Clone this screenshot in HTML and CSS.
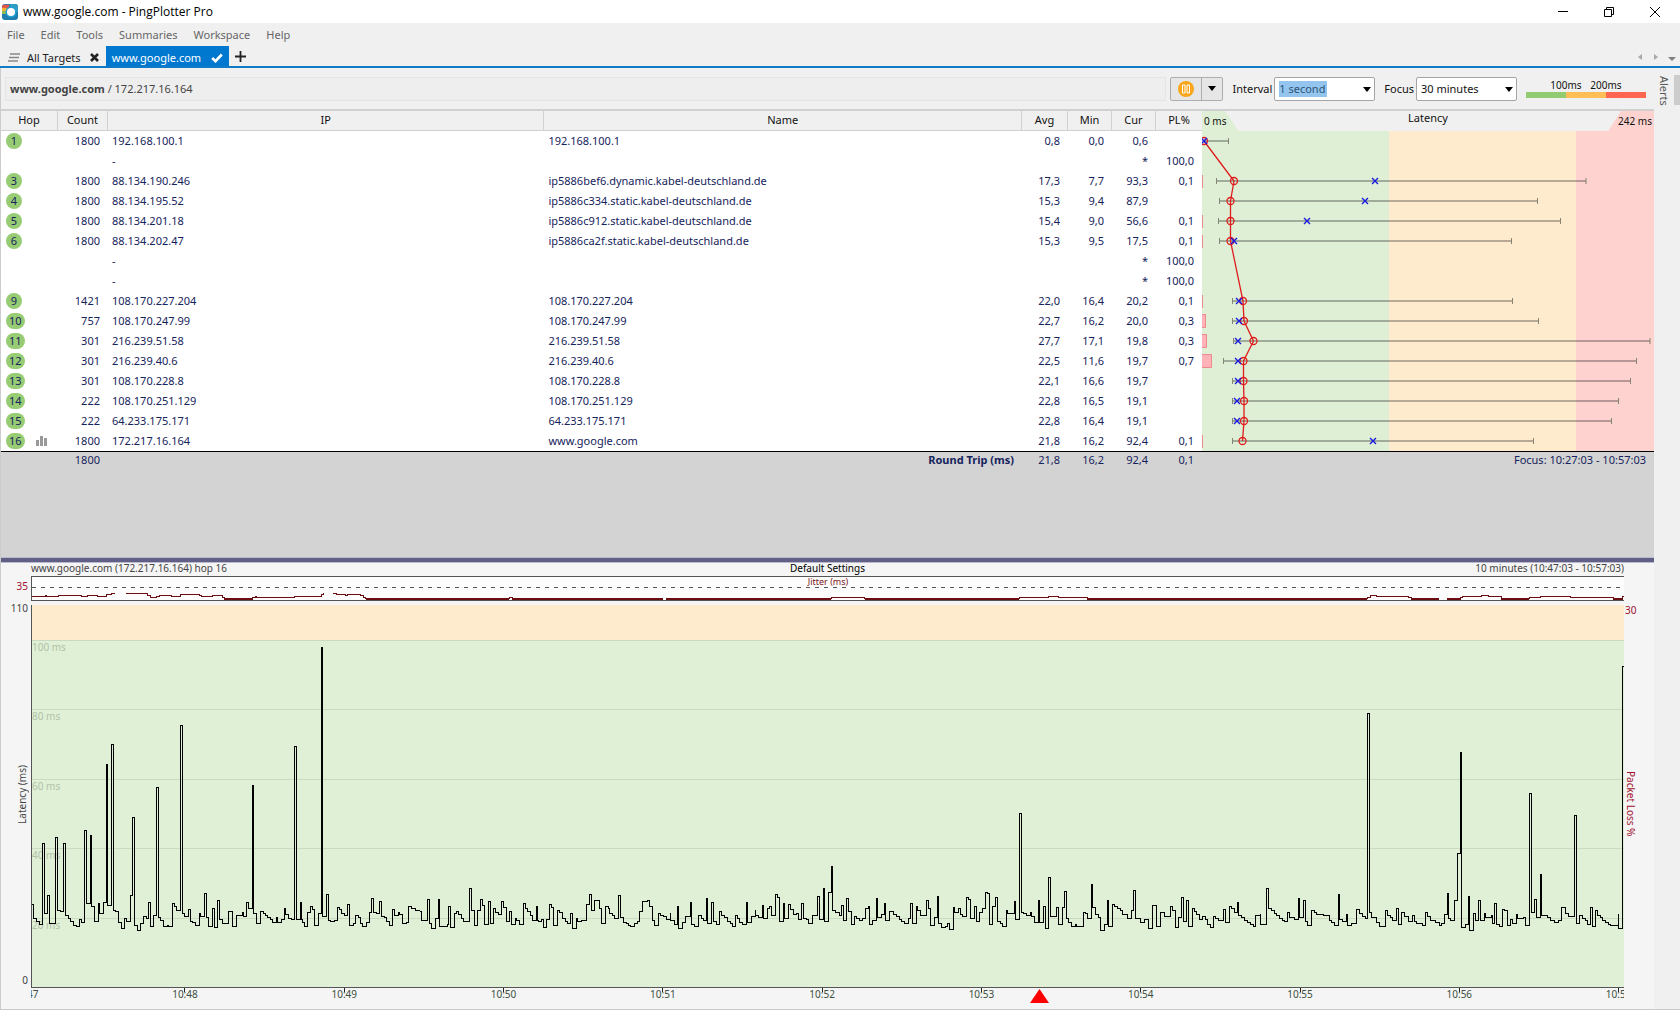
FILE: index.html
```html
<!DOCTYPE html>
<html lang="en">
<head>
<meta charset="utf-8">
<title>www.google.com - PingPlotter Pro</title>
<link rel="stylesheet" href="styles.css">
</head>
<body>
<div class="app">
  <header class="titlebar">
    <svg class="app-icon" width="16" height="16" viewBox="0 0 16 16" aria-hidden="true">
      <rect width="16" height="16" rx="3" fill="#1f7fae"/>
      <path d="M8 0h5a3 3 0 0 1 3 3v5L8 8z" fill="#2f9cc4"/>
      <path d="M0 3a3 3 0 0 1 1-2.200H7V5H0z" fill="#e2574c"/>
      <path d="M0 4h6v3H0z" fill="#f5b335"/>
      <path d="M0 7h6v3H0z" fill="#8cc152"/>
      <circle cx="9" cy="8" r="5.500" fill="#23a0cf"/>
      <circle cx="9" cy="8" r="4" fill="#fff"/>
    </svg>
    <span class="title">www.google.com - PingPlotter Pro</span>
    <div class="window-buttons">
      <button type="button" aria-label="Minimize"><svg width="12" height="12" viewBox="0 0 12 12"><path d="M1 5.500h10" stroke="#000"/></svg></button>
      <button type="button" aria-label="Restore"><svg width="12" height="12" viewBox="0 0 12 12"><path d="M1.500 3.500h7v7h-7zM3.500 3.500v-2h7v7h-2" fill="none" stroke="#000"/></svg></button>
      <button type="button" aria-label="Close"><svg width="12" height="12" viewBox="0 0 12 12"><path d="M1 1l10 10M11 1L1 11" stroke="#000"/></svg></button>
    </div>
  </header>

  <nav class="menu">
    <a href="#">File</a><a href="#">Edit</a><a href="#">Tools</a><a href="#">Summaries</a><a href="#">Workspace</a><a href="#">Help</a>
  </nav>

  <nav class="tabs">
    <a class="tab" href="#">
      <svg width="13" height="9" viewBox="0 0 13 9"><path d="M3 1h10M2 4.500h10M1 8h10" stroke="#888" stroke-width="1.500"/></svg>
      <span>All Targets</span>
      <svg class="tab-close" width="9" height="9" viewBox="0 0 9 9"><path d="M1 1l7 7M8 1L1 8" stroke="#222" stroke-width="2.600"/></svg>
    </a>
    <a class="tab tab-active" href="#">
      <span>www.google.com</span>
      <svg width="12" height="10" viewBox="0 0 12 10"><path d="M1.200 5l3.300 3.200L10.800 1.500" fill="none" stroke="#fff" stroke-width="2.600"/></svg>
    </a>
    <button class="tab-add" type="button" aria-label="New tab"><svg width="11" height="11" viewBox="0 0 11 11"><path d="M5.500 0v11M0 5.500h11" stroke="#222" stroke-width="1.800"/></svg></button>
    <div class="tab-scroll">
      <svg width="5" height="8" viewBox="0 0 5 8"><path d="M4 1v6L0 4z" fill="#a8a8a8"/></svg>
      <svg width="5" height="8" viewBox="0 0 5 8"><path d="M1 1v6l4-3z" fill="#a8a8a8"/></svg>
      <svg width="8" height="8" viewBox="0 0 8 8"><path d="M0 4h8L4 8z" fill="#808080"/></svg>
    </div>
  </nav>

  <div class="main">
    <main class="workspace">
      <div class="toolbar">
        <div class="target"><b>www.google.com</b> / 172.217.16.164</div>
        <div class="pause">
          <button type="button" aria-label="Pause"><svg width="16" height="16" viewBox="0 0 16 16"><circle cx="8" cy="8" r="8" fill="#f9a61a"/><path d="M4.500 4h2.500v8H4.500zM9 4h2.500v8H9z" fill="none" stroke="#fff"/></svg></button>
          <button type="button" aria-label="Pause options"><svg width="8" height="5" viewBox="0 0 8 5"><path d="M0 0h8L4 5z"/></svg></button>
        </div>
        <label for="interval">Interval</label>
        <div class="combo combo-selected"><select id="interval"><option>1 second</option><option>2.5 seconds</option></select></div>
        <label for="focus">Focus</label>
        <div class="combo"><select id="focus"><option>30 minutes</option><option>60 minutes</option></select></div>
        <div class="legend">
          <div class="legend-labels"><span>100ms</span><span>200ms</span></div>
          <div class="legend-bar"><i class="good"></i><i class="warn"></i><i class="bad"></i></div>
        </div>
      </div>

      <table class="hops">
        <colgroup><col class="c-hop"><col class="c-count"><col class="c-ip"><col class="c-name"><col class="c-avg"><col class="c-num"><col class="c-num"><col class="c-pl"><col class="c-latency"></colgroup>
        <thead>
          <tr>
            <th>Hop</th><th>Count</th><th>IP</th><th>Name</th><th>Avg</th><th>Min</th><th>Cur</th><th>PL%</th>
            <th class="latency-head"><div class="latency-scale"><span class="scale-low">0 ms</span><span>Latency</span><span class="scale-high">242 ms</span></div></th>
          </tr>
        </thead>
        <tbody>
          <tr><td><b>1</b></td><td>1800</td><td>192.168.100.1</td><td>192.168.100.1</td><td>0,8</td><td>0,0</td><td>0,6</td><td></td>
            <td class="latency" rowspan="16">
              <svg width="452" height="320" viewBox="0 0 452 320" role="img" aria-label="Latency per hop">
                <path fill="#deefd5" d="M0 0h187v320H0z"/>
                <path fill="#feeacd" d="M187 0h187v320H187z"/>
                <path fill="#fdd2cf" d="M374 0h78v320h-78z"/>
                <g fill="#ffb3b9" stroke="#ee8a8c">
                  <path d="M.5 44v13M.5 84v13M.5 104v13M.5 164v13M.5 304v13"/>
                  <path d="M-.5 183.500h4v13h-4zM-.5 203.500h5v13h-5zM-.5 223.500h10v13h-10z"/>
                </g>
                <path stroke="#000" stroke-opacity=".28" stroke-width="2" d="M1 10H27M14 50H384M17 70H336M16 90H358M17 110H310M30 170H311M30 190H337M31 210H448M21 230H435M30 250H428M30 270H416M30 290H409M30 310H331"/>
                <path stroke="#858577" d="M26.500 7v6M14.500 47v6M384 47v6M17.500 67v6M335.500 67v6M16.500 87v6M358.500 87v6M17.500 107v6M309.500 107v6M30.500 167v6M310.500 167v6M30.500 187v6M336.500 187v6M31.500 207v6M448 207v6M21.500 227v6M434.500 227v6M30.500 247v6M428.500 247v6M30.500 267v6M416.500 267v6M30.500 287v6M409.500 287v6M30.500 307v6M331.500 307v6"/>
                <g stroke="#e01c1c" stroke-width="1.300" fill="none">
                  <path d="M2 10L32 50L28.500 70V110L41 170L42 190L51.500 210L41.500 230V250L42 270V290L40.500 310"/>
                  <circle cx="2" cy="10" r="3.500"/><circle cx="32" cy="50" r="3.500"/><circle cx="28.500" cy="70" r="3.500"/><circle cx="28.500" cy="90" r="3.500"/><circle cx="28.500" cy="110" r="3.500"/><circle cx="41" cy="170" r="3.500"/><circle cx="42" cy="190" r="3.500"/><circle cx="51.500" cy="210" r="3.500"/><circle cx="41.500" cy="230" r="3.500"/><circle cx="41.500" cy="250" r="3.500"/><circle cx="42" cy="270" r="3.500"/><circle cx="42" cy="290" r="3.500"/><circle cx="40.500" cy="310" r="3.500"/>
                </g>
                <path stroke="#1a1ae0" stroke-width="1.400" d="M-1 7l6 6m0-6l-6 6M170 47l6 6m0-6l-6 6M160 67l6 6m0-6l-6 6M102 87l6 6m0-6l-6 6M29 107l6 6m0-6l-6 6M34 167l6 6m0-6l-6 6M34 187l6 6m0-6l-6 6M33 207l6 6m0-6l-6 6M33 227l6 6m0-6l-6 6M33 247l6 6m0-6l-6 6M32 267l6 6m0-6l-6 6M32 287l6 6m0-6l-6 6M168 307l6 6m0-6l-6 6"/>
              </svg>
            </td></tr>
          <tr><td></td><td></td><td>-</td><td></td><td></td><td></td><td>*</td><td>100,0</td></tr>
          <tr><td><b>3</b></td><td>1800</td><td>88.134.190.246</td><td>ip5886bef6.dynamic.kabel-deutschland.de</td><td>17,3</td><td>7,7</td><td>93,3</td><td>0,1</td></tr>
          <tr><td><b>4</b></td><td>1800</td><td>88.134.195.52</td><td>ip5886c334.static.kabel-deutschland.de</td><td>15,3</td><td>9,4</td><td>87,9</td><td></td></tr>
          <tr><td><b>5</b></td><td>1800</td><td>88.134.201.18</td><td>ip5886c912.static.kabel-deutschland.de</td><td>15,4</td><td>9,0</td><td>56,6</td><td>0,1</td></tr>
          <tr><td><b>6</b></td><td>1800</td><td>88.134.202.47</td><td>ip5886ca2f.static.kabel-deutschland.de</td><td>15,3</td><td>9,5</td><td>17,5</td><td>0,1</td></tr>
          <tr><td></td><td></td><td>-</td><td></td><td></td><td></td><td>*</td><td>100,0</td></tr>
          <tr><td></td><td></td><td>-</td><td></td><td></td><td></td><td>*</td><td>100,0</td></tr>
          <tr><td><b>9</b></td><td>1421</td><td>108.170.227.204</td><td>108.170.227.204</td><td>22,0</td><td>16,4</td><td>20,2</td><td>0,1</td></tr>
          <tr><td><b>10</b></td><td>757</td><td>108.170.247.99</td><td>108.170.247.99</td><td>22,7</td><td>16,2</td><td>20,0</td><td>0,3</td></tr>
          <tr><td><b>11</b></td><td>301</td><td>216.239.51.58</td><td>216.239.51.58</td><td>27,7</td><td>17,1</td><td>19,8</td><td>0,3</td></tr>
          <tr><td><b>12</b></td><td>301</td><td>216.239.40.6</td><td>216.239.40.6</td><td>22,5</td><td>11,6</td><td>19,7</td><td>0,7</td></tr>
          <tr><td><b>13</b></td><td>301</td><td>108.170.228.8</td><td>108.170.228.8</td><td>22,1</td><td>16,6</td><td>19,7</td><td></td></tr>
          <tr><td><b>14</b></td><td>222</td><td>108.170.251.129</td><td>108.170.251.129</td><td>22,8</td><td>16,5</td><td>19,1</td><td></td></tr>
          <tr><td><b>15</b></td><td>222</td><td>64.233.175.171</td><td>64.233.175.171</td><td>22,8</td><td>16,4</td><td>19,1</td><td></td></tr>
          <tr><td><b>16</b><svg class="bars" width="11" height="10" viewBox="0 0 11 10" aria-label="Graphed"><path d="M0 4h3v6H0zM4 0h3v10H4zM8 2h3v8H8z" fill="#999"/></svg></td><td>1800</td><td>172.217.16.164</td><td>www.google.com</td><td>21,8</td><td>16,2</td><td>92,4</td><td>0,1</td></tr>
        </tbody>
        <tfoot>
          <tr><td></td><td>1800</td><td></td><td class="round-trip">Round Trip (ms)</td><td>21,8</td><td>16,2</td><td>92,4</td><td>0,1</td><td class="focus-range">Focus: 10:27:03 - 10:57:03</td></tr>
        </tfoot>
      </table>
      <div class="blank"></div>
      <div class="splitter"></div>

      <section class="timeline">
        <div class="timeline-head"><span>www.google.com (172.217.16.164) hop 16</span><span class="preset">Default Settings</span><span>10 minutes (10:47:03 - 10:57:03)</span></div>
        <div class="jitter-scale">35</div>
        <div class="jitter">
          <svg viewBox="96 531 4776 69" preserveAspectRatio="none" role="img" aria-label="Jitter">
            <path class="limit" d="M96 562H4872"/>
            <path class="jitter-line" d="M95 589H135V586H139V589H175V586H245V589H262V586H292V589H320V584H333V580H344M378 580H442V586H450V592H470V589H478V586H515V589H540V583H597V586H605V589H637V586H668V592H673V598M758 598V592H765V589H770V592H883V589H963V583H970V580M1000 580H1010V583H1035V586H1042V583H1082V586H1090V592H1097V598M1528 598V592H1536V598M2494 598V592H2594V598M3058 598V592H3145V589H3176V592H3262V598M4102 598V592H4110V586H4128V589H4226V592H4234V598M4382 598V592H4386V589H4443V586H4465V589H4504V598M4588 598V592H4621V589H4712V592H4840V598M4868 598V589H4872"/>
            <path class="jitter-line jitter-base" d="M673 597H758M1097 597H1528M1536 597H1988M1998 597H2494M2594 597H3058M3262 597H4102M4234 597H4316M4342 597H4382M4504 597H4588M4840 597H4868"/>
          </svg>
          <span class="jitter-title">Jitter (ms)</span>
        </div>
        <div class="latency-axis"><span>110</span><span class="axis-title">Latency (ms)</span><span>0</span></div>
        <div class="plot">
          <div class="grid-line g100">100 ms</div><div class="grid-line g80">80 ms</div><div class="grid-line g60">60 ms</div><div class="grid-line g40">40 ms</div><div class="grid-line g20">20 ms</div>
          <svg viewBox="96 15 4776 1146" preserveAspectRatio="none" role="img" aria-label="Latency over time">
            <path class="trace" d="M95 913H101V954H109V963H117V972H127V729H133V939H142V887H149V969H166V713H173V930H181V933H190V729H197V945H205V954H212V963H221V975H229V978H239V957H245V966H254V692H260V909H272V707H274V918H283V963H295V909H297V939H310V906H320V493H322V915H334V434H341V930H347V933H355V966H365V984H373V954H380V963H391V887H398V653H404V975H413V990H421V969H430V948H438V954H445V906H452V978H460V945H469V563H476V951H482V960H491V978H502V975H504V978H517V911H523V918H530V930H541V377H548V939H553V948H565V927H571V963H578V966H587V975H598V939H601V948H613V881H620V951H626V978H637V924H643V981H652V902H659V957H667V969H685V933H697V978H709V945H726V936H730V948H740V908H746V924H758V557H760V939H769V969H781V933H789V939H795V945H803V951H810V957H818V966H830V951H832V966H844V957H853V924H856V942H865V954H873V957H883V440H890V957H902V908H904V957H906V966H914V978H922V936H932V918H938V927H943V975H955V939H965V142H967V948H979V884H986V960H990V963H1003V960H1013V921H1018V927H1025V939H1033V945H1043V914H1048V975H1061V969H1067V945H1075V951H1081V969H1088V978H1100V966H1109V936H1115V896H1120V936H1130V939H1139V905H1145V948H1153V951H1160V963H1168V975H1178V927H1184V945H1196V936H1198V942H1207V969H1220V966H1226V918H1234V924H1247V930H1260"/>
            <path class="trace" transform="translate(1260 600)" d="M0 333H5V360H23V299H29V369H35V384H47V354H56V298H58V378H83V372H85V320H91V381H103V339H109V333H116V342H124V354H131V363H148V266H154V330H164V375H173V330H182V299H187V315H194V373H206V305H212V369H221V325H227V336H235V342H245V305H251V321H260V363H269V333H274V372H287V354H290V360H297V372H311V311H315V324H322V333H331V345H338V360H350V320H352V360H354V363H365V357H371V381H379V357H389V314H395V321H401V375H413V330H419V338H427V354H435V363H441V369H451V341H457V384H469V354H473V363H485V360H499V312H508V284H514V330H524V302H537V324H545V369H557V320H565V324H569V339H577V345H584V354H596V287H602V351H609V366H619V369H626V375H632V378H644V369H653V363H658V333H668V305H683V300H689V318H697V360H703V375H715V339H720V345H730V348H738V357H750V339H752V360H762V372H773V320H775V384H788V366H797V348H812V308H814V372H823V378H835V345H843V354H851V360H860V295H862V369H875V308H881V363H890V372H898V333H905V345H912V351H922V363H930V369H937V378H946V347H953V354H959V366H967V372H980V308H982V366H995V348H1005V330H1007V345H1015V351H1028V317H1030V354H1043V324H1048V318H1054V345H1067V284H1071V291H1078V363H1091V311H1093V354H1105V314H1112V327H1119V342H1130V339H1135V357H1145V311H1150V354H1158V357H1166V369H1178V345H1193V290H1198V357H1211V266H1213V363H1226V278H1235V200H1238V330H1247V338H1257V347H1260"/>
            <path class="trace" transform="translate(2520 600)" d="M0 345H4V317H11V360H19V296H26V333H34V372H43V348H50V354H58V362H67V354H76V324H84V318H88V372H98V360H110V296H112V351H124V342H134V311H136V360H148V333H160V342H170V348H178V357H185V363H193V369H206V354H211V311H217V369H229V320H232V332H242V347H259V302H266V326H271V375H283V351H293V290H295V369H304V381H316V378H322V370H328V387H341V323H344V336H356V326H361V342H368V348H380V293H386V299H391V354H404V320H410V363H418V336H428V324H437V278H443V281H449V372H458V318H467V293H473V363H480V369H488V378H500V330H503V341H523V305H526V357H538V41H544V336H550V339H560V345H572V336H575V350H584V366H596V302H598V366H611V320H617V384H626V233H632V348H650V323H655V372H668V321H674V275H680V354H686V366H695V378H707V372H710V378H731V336H735V341H743V354H755V254H757V323H766V342H776V351H782V390H794V372H803V302H805V378H818V314H822V320H832V324H840V330H848V342H863V354H873V330H881V272H887V354H901V366H913V357H926V384H938V315H949V378H961V336H974V348H992V320H998V330H1007V381H1016V351H1025V293H1031V363H1040V302H1046V378H1058V326H1062V335H1070V342H1079V357H1088V348H1095V357H1103V372H1110V381H1121V350H1127V354H1136V360H1151V329H1156V366H1169V318H1175V326H1183V338H1193V308H1195V347H1204V353H1213V360H1222V366H1231V372H1239V378H1247V347H1260"/>
            <path class="trace" transform="translate(3780 -180)" d="M0 1124H2V1153H19V1046H26V1106H34V1112H42V1121H50V1127H58V1136H66V1142H74V1145H82V1116H88V1133H103V1137H116V1074H118V1133H130V1082H137V1145H143V1157H154V1112H162V1118H170V1124H190V1127H208V1142H215V1148H223V1157H236V1064H238V1139H248V1145H260V1124H262V1157H275V1151H290V1109H297V1121H308V1130H315V1136H323V521H329V1118H334V1133H349V1148H358V1160H376V1112H383V1127H390V1133H398V1142H409V1106H416V1154H425V1118H432V1130H444V1145H458V1127H463V1145H470V1151H488V1157H496V1118H502V1130H510V1142H526V1148H537V1157H544V1151H554V1124H563V1061H565V1136H572V1142H583V1082H592V941H602V637H604V1163H616V1154H626V1070H629V1170H641V1121H647V1142H656V1082H662V1142H673V1121H676V1133H694V1127H697V1151H704V1091H710V1154H718V1160H728V1109H734V1112H742V1157H752V1139H757V1151H770V1124H773V1136H790V1133H796V1157H808V761H815V1116H824V1079H830V1133H842V1004H845V1127H863V1133H870V1142H884V1148H896V1142H905V1103H916V1121H925V1130H943V827H949V1151H959V1127H967V1136H976V1142H983V1154H992V1101H998V1160H1007V1112H1012V1127H1020V1133H1028V1142H1036V1148H1045V1154H1052V1157H1074V1124H1076V1166H1088V380H1092"/>
          </svg>
        </div>
        <div class="loss-axis"><span>30</span><span class="axis-title">Packet Loss %</span></div>
        <div class="time-axis">
          <div class="times"><span>10:47</span><span>10:48</span><span>10:49</span><span>10:50</span><span>10:51</span><span>10:52</span><span>10:53</span><span>10:54</span><span>10:55</span><span>10:56</span><span>10:57</span></div>
          <svg class="marker" width="19" height="14" viewBox="0 0 19 14" aria-label="Event"><path d="M9.500 0L19 14H0z" fill="#f00"/></svg>
        </div>
      </section>
    </main>
    <aside class="alerts"><button type="button">Alerts</button><i></i></aside>
  </div>
</div>
</body>
</html>
```
FILE: styles.css
```css
* { box-sizing: border-box; }

body {
  margin: 0;
  background: #f0f0f0;
  color: #111;
  font: 11px/16px "Noto Sans", "Open Sans", sans-serif;
}

a { color: inherit; text-decoration: none; }
svg { display: block; flex: none; }

button {
  display: flex;
  align-items: center;
  justify-content: center;
  padding: 0;
  border: 0;
  background: none;
  color: inherit;
  font: inherit;
}

.app {
  display: flex;
  flex-direction: column;
  min-height: 100vh;
  border-bottom: 1px solid #c8c8c8;
}

.titlebar {
  display: flex;
  align-items: center;
  gap: 5px;
  height: 23px;
  padding: 0 2px;
  background: #fff;
  color: #000;
}
.title { font-family: "Open Sans", "Noto Sans", sans-serif; font-size: 12px; }
.window-buttons { display: flex; margin-left: auto; }
.window-buttons button { width: 46px; height: 20px; }

.menu {
  display: flex;
  align-items: center;
  gap: 16px;
  height: 23px;
  padding: 0 7px;
  color: #666;
}

.tabs {
  display: flex;
  height: 22px;
  border-bottom: 2px solid #117ac6;
}
.tab {
  display: flex;
  align-items: center;
  gap: 7px;
  padding: 3px 7px 0;
  color: #222;
}
.tab-close { margin-left: 2px; }
.tab-active {
  gap: 10px;
  padding: 3px 6px 0;
  background: #0078d0;
  color: #fff;
}
.tab-add { width: 22px; }
.tab-scroll {
  display: flex;
  align-items: center;
  gap: 10px;
  margin-left: auto;
  padding: 2px 4px 0;
}

.main { display: flex; flex: 1; }
.workspace {
  display: flex;
  flex: 1;
  flex-direction: column;
  min-width: 0;
  border-left: 1px solid #ccc;
}

.toolbar {
  display: flex;
  align-items: center;
  height: 41px;
  padding: 0 8px 0 4px;
}
.target {
  flex: 1;
  height: 24px;
  margin-right: 4px;
  padding: 3px 4px;
  border: 1px solid #e4e4e4;
  background: #eee;
  color: #444;
}
.pause {
  display: flex;
  height: 24px;
  margin-right: 9px;
  border: 1px solid #adadad;
  border-radius: 2px;
  background: #e6e6e6;
}
.pause button { width: 30px; }
.pause button + button { width: 21px; border-left: 1px solid #adadad; }

.combo { position: relative; margin: 0 9px 0 2px; }
.combo select {
  display: block;
  width: 101px;
  height: 24px;
  padding: 0 4px;
  appearance: none;
  border: 1px solid #a5a5a5;
  border-radius: 2px;
  background: #fff;
  color: #111;
  font: inherit;
}
.combo-selected select {
  background: linear-gradient(#93c5ee, #93c5ee) 4px 3px / 48px 16px no-repeat #fff;
  color: #2c5478;
}
.combo::after {
  content: "";
  position: absolute;
  top: 10px;
  right: 4px;
  border: 4px solid transparent;
  border-top: 5px solid #000;
  border-bottom: 0;
  pointer-events: none;
}
.legend { width: 120px; }
.legend-labels { display: flex; justify-content: center; line-height: 13px; font-size: 10px; }
.legend-labels span { width: 40px; text-align: center; }
.legend-bar { display: flex; height: 6px; }
.legend-bar i { flex: 1; }
.good { background: #93cb72; }
.warn { background: #ffbe55; }
.bad { background: #ff6652; }

.hops {
  width: 100%;
  table-layout: fixed;
  border-collapse: separate;
  border-spacing: 0;
  border-top: 2px solid #d0d0d0;
  background: #fff;
  color: #15235c;
}
.c-hop { width: 57px; }
.c-count { width: 50px; }
.c-ip { width: 26.4%; }
.c-avg, .c-pl { width: 46px; }
.c-num { width: 44px; }
.c-latency { width: 452px; }
.hops th {
  height: 20px;
  padding: 0 0 2px;
  border-right: 1px solid #d0d0d0;
  border-bottom: 1px solid #d0d0d0;
  background: #f0f0f0;
  color: #111;
  font-weight: 400;
}
.hops th:nth-last-child(-n+2) { border-right: 0; }
.hops th.latency-head { padding: 0; border: 0; }
.latency-scale {
  display: grid;
  grid-template-columns: 1fr auto 1fr;
  height: 20px;
  padding: 0 2px;
  line-height: 14px;
  background:
    linear-gradient(57deg, #deefd5 30px, transparent 31px) 0 0 / 60px 20px no-repeat,
    linear-gradient(-57deg, #fdd2cf 38px, transparent 39px) 100% 0 / 60px 20px no-repeat,
    #f0f0f0;
}
.scale-low, .scale-high { padding-top: 3px; font-size: 10px; text-align: left; }
.scale-high { text-align: right; }

.hops td {
  height: 20px;
  padding: 0 8px 0 0;
  overflow: hidden;
  line-height: 20px;
  text-align: right;
  white-space: nowrap;
}
.hops td:nth-child(3), .hops td:nth-child(4) { padding-left: 4px; text-align: left; }
.hops td:first-child { padding-left: 5px; text-align: left; }
.hops td b {
  display: inline-block;
  min-width: 16px;
  height: 16px;
  margin-top: 2px;
  padding: 0 3px;
  border-radius: 8px;
  background: #97cc74;
  line-height: 15px;
  font-weight: 400;
  text-align: center;
  vertical-align: top;
}
.hops .bars { display: inline-block; margin: 5px 0 0 11px; vertical-align: top; }
.hops td.latency { padding: 0; vertical-align: top; }
.hops tfoot td {
  height: 18px;
  padding-bottom: 2px;
  border-top: 1px solid #000;
  background: #d3d3d3;
  line-height: 15px;
}
.hops tfoot td.round-trip { font-weight: 700; text-align: right; }

.blank { height: 88px; background: #d3d3d3; }
.splitter {
  height: 6px;
  border-top: 1px solid #b9bad0;
  border-bottom: 1px solid #b9bad0;
  background: #625f86;
}

.timeline {
  display: grid;
  flex: 1;
  grid-template-columns: 30px minmax(0, 1fr) 30px;
  grid-template-rows: 13px 25px 4px minmax(200px, 1fr) 21px;
  background: #f5f5f5;
  color: #444;
}
.timeline-head {
  display: grid;
  grid-column: 2;
  grid-template-columns: 1fr auto 1fr;
  font-size: 10px;
  line-height: 11px;
}
.timeline-head span:last-child { text-align: right; }
.preset { color: #000; }
.jitter-scale {
  grid-column: 1;
  grid-row: 2;
  padding: 2px 3px 0;
  color: #a0102c;
  font-size: 10px;
  text-align: right;
}
.jitter {
  position: relative;
  grid-column: 2;
  grid-row: 2;
  border: 1px solid #555;
  border-right: 0;
  background: #fcfcfc;
}
.jitter svg, .plot svg { width: 100%; height: 100%; }
.jitter path, .trace {
  fill: none;
  vector-effect: non-scaling-stroke;
  shape-rendering: crispEdges;
}
.limit { stroke: #555; stroke-dasharray: 4 5; }
.jitter-line { stroke: #6c0d12; }
.jitter .jitter-base { stroke-width: 2px; }
.jitter-title {
  position: absolute;
  top: 0;
  left: 50%;
  transform: translateX(-50%);
  color: #7d1522;
  font-size: 9px;
  line-height: 10px;
}
.latency-axis {
  display: flex;
  grid-column: 1;
  grid-row: 4;
  flex-direction: column;
  align-items: flex-end;
  justify-content: space-between;
  padding: 0 3px 4px;
  font-size: 10px;
  line-height: 7px;
}
.axis-title { writing-mode: vertical-rl; line-height: 12px; }
.latency-axis .axis-title { transform: rotate(180deg); }
.plot {
  position: relative;
  grid-column: 2;
  grid-row: 4;
  border-left: 1px solid #555;
  border-bottom: 1px solid #555;
  background: linear-gradient(#feeacd calc(100% / 11), #e0f0d6 calc(100% / 11));
}
.plot svg { position: relative; }
.trace { stroke: #000; }
.grid-line {
  position: absolute;
  right: 0;
  left: 0;
  border-top: 1px solid #c9dac1;
  color: #b0c2a8;
  font-size: 10px;
  line-height: 12px;
}
/* The scale runs from 0 to 110 ms, so every 10 ms is one eleventh. */
.g100 { top: calc(100% * 1 / 11); }
.g80 { top: calc(100% * 3 / 11); }
.g60 { top: calc(100% * 5 / 11); }
.g40 { top: calc(100% * 7 / 11); }
.g20 { top: calc(100% * 9 / 11); }
.loss-axis {
  display: flex;
  grid-column: 3;
  grid-row: 4;
  flex-direction: column;
  align-items: flex-start;
  gap: 156px;
  padding: 0 1px;
  color: #a0102c;
  font-size: 10px;
  line-height: 10px;
}
.time-axis {
  position: relative;
  grid-column: 2;
  grid-row: 5;
  overflow: hidden;
  color: #3c5040;
  font-size: 10px;
}
.times { display: flex; width: 100%; margin-left: -85px; }
.times span {
  flex: 0 0 10%;
  background: linear-gradient(#222, #222) 50% 0 / 1px 4px no-repeat;
  line-height: 13px;
  text-align: center;
}
.marker { position: absolute; top: 1px; left: 62.7%; }

.alerts { display: flex; width: 26px; padding-top: 7px; }
.alerts button {
  width: 20px;
  height: 32px;
  color: #555;
  writing-mode: vertical-rl;
}
.alerts i { width: 6px; height: 30px; background: #ccc; }
```
